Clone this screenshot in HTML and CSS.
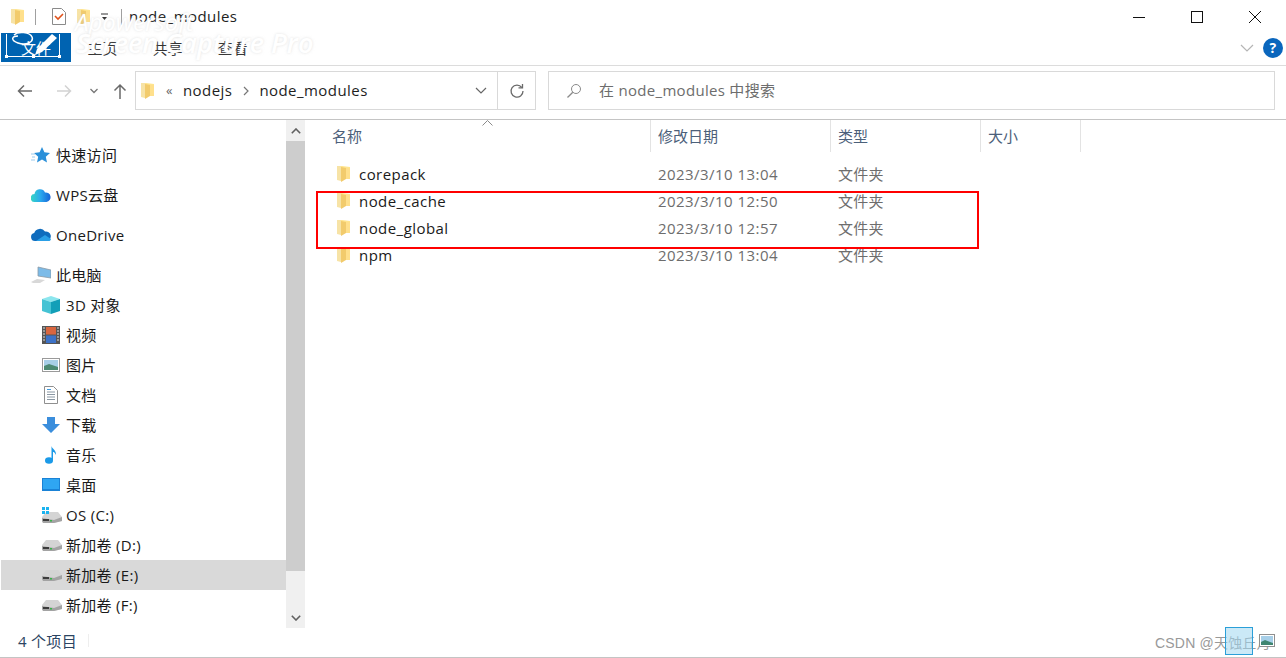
FILE: index.html
```html
<!DOCTYPE html>
<html lang="zh-CN">
<head>
  <meta charset="UTF-8">
  <title>node_modules</title>
  <link rel="stylesheet" href="styles.css">
</head>
<body>
  <svg class="defs" width="0" height="0">
    <defs>
      <symbol id="folder" viewBox="0 0 13 17">
        <path d="M0 1h5l8 1v12H0z" fill="#ffe58f"/>
        <path d="M0 1h4v15l-4-1z" fill="#f7e3a6"/>
        <path d="M4 2l5 1v11l-5 3z" fill="#f2cb6c"/>
        <path d="M9 3h4v11H9z" fill="#ffe08c"/>
      </symbol>
      <symbol id="drive" viewBox="0 0 20 12">
        <path d="M4 1h12l4 5v4l-8 2H1l-1-2V6z" fill="#d4d4d4"/>
        <path d="M0 7l12 2 8-3v4l-8 2H1l-1-2z" fill="#a3a3a3"/>
        <rect x="1" y="8" width="6" height="2" fill="#3b3b3b"/>
        <rect x="8" y="9" width="2" height="1.500" fill="#38b44a"/>
      </symbol>
    </defs>
  </svg>

  <div class="window">
    <div class="titlebar">
      <svg class="qa-folder" width="13" height="17"><use href="#folder"/></svg>
      <span class="qa-sep"></span>
      <svg class="qa-doc" width="14" height="17" viewBox="0 0 14 17">
        <path d="M.5.5h9l4 4v12H.5z" fill="#fff" stroke="#8a8a8a"/>
        <path d="M3 8l3 3 5-5" fill="none" stroke="#e0521b" stroke-width="1.6"/>
      </svg>
      <svg class="qa-folder2" width="13" height="17"><use href="#folder"/></svg>
      <svg class="qa-drop" width="8" height="8" viewBox="0 0 8 8">
        <path d="M0 1h7" stroke="#333"/><path d="M1 4h5L3.500 7z" fill="#333"/>
      </svg>
      <span class="qa-sep second"></span>
      <span class="title-text">node_modules</span>
      <div class="win-btns">
        <svg width="14" height="14" viewBox="0 0 14 14"><path d="M1 7.500h12" stroke="#111"/></svg>
        <svg width="14" height="14" viewBox="0 0 14 14"><rect x="1.500" y="1.500" width="11" height="11" fill="none" stroke="#111"/></svg>
        <svg width="14" height="14" viewBox="0 0 14 14"><path d="M1 1l12 12M13 1L1 13" stroke="#111"/></svg>
      </div>
    </div>

    <div class="ribbon">
      <div class="tab file">文件</div>
      <div class="tab">主页</div>
      <div class="tab">共享</div>
      <div class="tab">查看</div>
      <div class="ribbon-right">
        <svg width="14" height="8" viewBox="0 0 14 8"><path d="M1 1l6 6 6-6" fill="none" stroke="#b5b5b5" stroke-width="1.200"/></svg>
        <span class="help">?</span>
      </div>
    </div>

    <div class="addressbar">
      <div class="nav">
        <svg width="16" height="14" viewBox="0 0 16 14"><path d="M15 7H2M7 1.500L1.500 7 7 12.500" fill="none" stroke="#6a6a6a" stroke-width="1.500"/></svg>
        <svg width="16" height="14" viewBox="0 0 16 14"><path d="M1 7h13M9 1.500L14.500 7 9 12.500" fill="none" stroke="#d2d2d2" stroke-width="1.500"/></svg>
        <svg width="8" height="6" viewBox="0 0 8 6"><path d="M.5 1L4 4.500 7.500 1" fill="none" stroke="#777" stroke-width="1.300"/></svg>
        <svg width="14" height="16" viewBox="0 0 14 16"><path d="M7 16V2M1.500 7.500L7 2l5.500 5.500" fill="none" stroke="#6a6a6a" stroke-width="1.500"/></svg>
      </div>
      <div class="path-box">
        <svg class="path-folder" width="13" height="17"><use href="#folder"/></svg>
        <span class="crumb-more">«</span>
        <span class="crumb">nodejs</span>
        <svg class="crumb-arrow" width="6" height="10" viewBox="0 0 6 10"><path d="M1 1l4 4-4 4" fill="none" stroke="#777" stroke-width="1.200"/></svg>
        <span class="crumb">node_modules</span>
        <svg class="path-drop" width="12" height="7" viewBox="0 0 12 7"><path d="M1 1l5 5 5-5" fill="none" stroke="#666" stroke-width="1.200"/></svg>
        <span class="path-refresh">
          <svg width="16" height="16" viewBox="0 0 16 16"><path d="M12.800 4.500A6 6 0 1 0 14 8" fill="none" stroke="#6a6a6a" stroke-width="1.300"/><path d="M9.500 4.800h4V1" fill="none" stroke="#6a6a6a" stroke-width="1.300"/></svg>
        </span>
      </div>
      <div class="search-box">
        <svg width="16" height="16" viewBox="0 0 16 16"><circle cx="10" cy="6" r="4.500" fill="none" stroke="#8a8a8a"/><path d="M6.800 9.200L1.500 14.500" stroke="#8a8a8a" stroke-width="1.300"/></svg>
        <span class="search-text">在 node_modules 中搜索</span>
      </div>
    </div>

    <div class="main">
      <nav class="sidebar">
        <div class="nav-item top">
          <svg class="ico" width="20" height="18" viewBox="0 0 20 18"><path d="M11 1l2.400 5.300 5.600.6-4.200 3.800 1.200 5.800L11 13.600 6 16.500l1.200-5.800L3 6.900l5.600-.6z" fill="#2b90d9"/><path d="M0 8h4M1 11h3M0 14h4" stroke="#9ccbee"/></svg>
          快速访问
        </div>
        <div class="nav-item top">
          <svg class="ico" width="20" height="14" viewBox="0 0 20 14"><defs><linearGradient id="wps" x1="0" y1="0" x2="1" y2="0"><stop offset="0" stop-color="#35d6c4"/><stop offset=".5" stop-color="#2aa8ee"/><stop offset="1" stop-color="#1763d6"/></linearGradient></defs><path d="M4 14a4 4 0 0 1-.5-8A5.500 5.500 0 0 1 14 4.500 4.800 4.800 0 0 1 15.500 14z" fill="url(#wps)"/></svg>
          WPS云盘
        </div>
        <div class="nav-item top">
          <svg class="ico" width="20" height="13" viewBox="0 0 20 13"><path d="M4 13a4 4 0 0 1-.8-7.900A6 6 0 0 1 14 3.600 4.800 4.800 0 0 1 16 13z" fill="#0f6cbd"/><path d="M5 13l9-6 6 4a2.500 2.500 0 0 1-3 2z" fill="#2a9fe6"/></svg>
          OneDrive
        </div>
        <div class="nav-item pc">
          <svg class="ico" width="20" height="18" viewBox="0 0 20 18"><path d="M7 1l13 3v8L7 10z" fill="#7cbbe8" stroke="#8c9aa6" stroke-width=".8"/><path d="M0 16l6-3 8 1-5 3H2z" fill="#d8d8d8"/></svg>
          此电脑
        </div>
        <div class="nav-item sub">
          <svg class="ico" width="18" height="18" viewBox="0 0 18 18"><path d="M9 0l9 3-9 3-9-3z" fill="#8ce6ee"/><path d="M0 3l9 3v12l-9-3z" fill="#45c3d4"/><path d="M18 3l-9 3v12l9-3z" fill="#139fb8"/></svg>
          3D 对象
        </div>
        <div class="nav-item sub">
          <svg class="ico" width="18" height="18" viewBox="0 0 18 18"><rect width="18" height="18" fill="#555"/><rect x="4" y="1" width="10" height="7.500" fill="#d9663f"/><rect x="4" y="9.500" width="10" height="7.500" fill="#3d72c7"/><path d="M1 2h2M1 5h2M1 8h2M1 11h2M1 14h2M15 2h2M15 5h2M15 8h2M15 11h2M15 14h2" stroke="#ddd" stroke-width="1.200"/></svg>
          视频
        </div>
        <div class="nav-item sub">
          <svg class="ico" width="18" height="14" viewBox="0 0 18 14"><rect x=".5" y=".5" width="17" height="13" fill="#fff" stroke="#9a9a9a"/><rect x="2" y="2" width="14" height="10" fill="#a7cfe8"/><path d="M2 8l5-2 9 3v3H2z" fill="#4c8a74"/></svg>
          图片
        </div>
        <div class="nav-item sub">
          <svg class="ico" width="14" height="18" viewBox="0 0 14 18"><path d="M.5.500h9l4 4v13H.5z" fill="#fff" stroke="#8f8f8f"/><path d="M3 6h8M3 8.500h8M3 11h8M3 13.500h8" stroke="#8a97a3"/><path d="M3 3.500h4" stroke="#3f9be0"/></svg>
          文档
        </div>
        <div class="nav-item sub">
          <svg class="ico" width="18" height="16" viewBox="0 0 18 16"><path d="M5 0h8v7h5l-9 9-9-9h5z" fill="#3b8edc"/></svg>
          下载
        </div>
        <div class="nav-item sub">
          <svg class="ico" width="12" height="18" viewBox="0 0 12 18"><ellipse cx="4" cy="14.500" rx="4" ry="3.300" fill="#1b9ae8"/><path d="M6.500 14V0c.5 3 5 4 4.500 9-1-2.500-2.500-3-3-3v8z" fill="#1b9ae8"/></svg>
          音乐
        </div>
        <div class="nav-item sub">
          <svg class="ico" width="18" height="13" viewBox="0 0 18 13"><rect width="18" height="13" fill="#1a82d6"/><rect x="1" y="1" width="16" height="10" fill="#2fa6f2"/></svg>
          桌面
        </div>
        <div class="nav-item sub">
          <svg class="ico wide" width="20" height="16" viewBox="0 0 20 16"><use href="#drive" y="4" width="20" height="12"/><path d="M0 0h3v3H0zM4 0h3v3H4zM0 4h3v3H0zM4 4h3v3H4z" fill="#1ab3f0"/></svg>
          OS (C:)
        </div>
        <div class="nav-item sub">
          <svg class="ico wide" width="20" height="12"><use href="#drive"/></svg>
          新加卷 (D:)
        </div>
        <div class="nav-item sub selected">
          <svg class="ico wide" width="20" height="12"><use href="#drive"/></svg>
          新加卷 (E:)
        </div>
        <div class="nav-item sub">
          <svg class="ico wide" width="20" height="12"><use href="#drive"/></svg>
          新加卷 (F:)
        </div>
      </nav>

      <div class="scrollbar">
        <div class="sb-btn">
          <svg width="10" height="6" viewBox="0 0 10 6"><path d="M.8 5.200L5 1l4.200 4.200" fill="none" stroke="#606060" stroke-width="1.600"/></svg>
        </div>
        <div class="sb-thumb"></div>
        <div class="sb-track"></div>
        <div class="sb-btn">
          <svg width="10" height="6" viewBox="0 0 10 6"><path d="M.8.800L5 5 9.200.800" fill="none" stroke="#606060" stroke-width="1.600"/></svg>
        </div>
      </div>

      <section class="files">
        <svg class="sort-caret" width="11" height="6" viewBox="0 0 11 6"><path d="M.5 5.500l5-5 5 5" fill="none" stroke="#8a8a8a"/></svg>
        <div class="row head">
          <div class="col name">名称</div>
          <div class="col date">修改日期</div>
          <div class="col type">类型</div>
          <div class="col size">大小</div>
        </div>
        <div class="rows">
          <div class="row">
            <div class="col name"><svg width="13" height="17"><use href="#folder"/></svg>corepack</div>
            <div class="col date">2023/3/10 13:04</div>
            <div class="col type">文件夹</div>
          </div>
          <div class="row">
            <div class="col name"><svg width="13" height="17"><use href="#folder"/></svg>node_cache</div>
            <div class="col date">2023/3/10 12:50</div>
            <div class="col type">文件夹</div>
          </div>
          <div class="row">
            <div class="col name"><svg width="13" height="17"><use href="#folder"/></svg>node_global</div>
            <div class="col date">2023/3/10 12:57</div>
            <div class="col type">文件夹</div>
          </div>
          <div class="row">
            <div class="col name"><svg width="13" height="17"><use href="#folder"/></svg>npm</div>
            <div class="col date">2023/3/10 13:04</div>
            <div class="col type">文件夹</div>
          </div>
        </div>
        <div class="redbox"></div>
      </section>
    </div>

    <div class="statusbar">
      <span>4 个项目</span>
      <span class="status-sep"></span>
    </div>
  </div>

  <!-- stuff from the capture tool, lies over the window -->
  <div class="mark-small">Apowersoft</div>
  <div class="mark-big">Screen Capture Pro</div>
  <svg class="scribble" width="56" height="26" viewBox="0 0 56 26">
    <path d="M8 3c4-4 16-3 18 2s-6 9-14 6-6-7 0-7" fill="none" stroke="#fff" stroke-width="1.500"/>
    <path d="M31 17L46 2l5 4-15 14-7 3z" fill="#fff"/>
  </svg>
  <div class="file-select"><i></i><i></i><i></i></div>
  <div class="csdn">CSDN @天蚀丘月</div>
  <div class="tray-box"></div>
  <svg class="tray-pic" width="16" height="14" viewBox="0 0 16 14"><rect x=".5" y=".5" width="15" height="12" fill="#fff" stroke="#8f8f8f"/><rect x="2" y="2" width="12" height="9" fill="#a7cfe8"/><path d="M2 8l4-2 8 3v2H2z" fill="#3f8570"/></svg>
</body>
</html>
```

FILE: styles.css
```css
* { box-sizing: border-box; }
html, body {
  margin: 0;
  height: 100%;
  overflow: hidden;
}
body {
  background: #fff;
  color: #1a1a1a;
  font-family: "Open Sans", "Noto Sans CJK SC", sans-serif;
  font-size: 15px;
  letter-spacing: .3px;
  position: relative;
}
.defs { position: absolute; }
.window {
  height: 658px;
  display: flex;
  flex-direction: column;
  border-bottom: 1px solid #c4c4c4;
}

/* title bar */
.titlebar {
  height: 33px;
  display: flex;
  align-items: center;
  padding-left: 11px;
  flex: none;
}
.qa-sep {
  width: 1px;
  height: 16px;
  background: #a0a0a0;
  margin-left: 11px;
}
.qa-sep.second { margin-left: 12px; }
.qa-doc { margin-left: 16px; }
.qa-folder2 { margin-left: 11px; }
.qa-drop { margin-left: 11px; }
.title-text {
  margin: 0 0 2px 7px;
  letter-spacing: .45px;
  color: #222;
}
.win-btns {
  margin-left: auto;
  display: flex;
  gap: 44px;
  padding-right: 24px;
}

/* ribbon */
.ribbon {
  height: 33px;
  flex: none;
  display: flex;
  padding-left: 1px;
  border-bottom: 1px solid #dcdcdc;
}
.tab {
  width: 65px;
  height: 29px;
  line-height: 31px;
  text-align: center;
  letter-spacing: 0;
  color: #333;
}
.tab.file {
  width: 70px;
  background: #0063b1;
  color: #fff;
  margin-right: -1px;
}
.ribbon-right {
  margin-left: auto;
  display: flex;
  align-items: center;
  gap: 9px;
  padding: 0 3px 2px 0;
}
.help {
  width: 20px;
  height: 20px;
  border-radius: 50%;
  background: #0a66bd;
  color: #fff;
  font-weight: 700;
  font-size: 14px;
  text-align: center;
  line-height: 20px;
}

/* address row */
.addressbar {
  height: 54px;
  flex: none;
  display: flex;
  align-items: center;
  padding: 0 11px 4px 0;
  border-bottom: 1px solid #c4c4c4;
}
.nav {
  width: 135px;
  padding-left: 17px;
  display: flex;
  align-items: center;
}
.nav svg:nth-child(2) { margin-left: 23px; }
.nav svg:nth-child(3) { margin-left: 18px; }
.nav svg:nth-child(4) { margin-left: 15px; }
.path-box, .search-box {
  height: 39px;
  border: 1px solid #d9d9d9;
  display: flex;
  align-items: center;
}
.path-box {
  width: 401px;
  padding-left: 5px;
  letter-spacing: .45px;
  color: #1e1e1e;
}
.path-folder { flex: none; }
.crumb { margin-bottom: 2px; }
.crumb-more { margin: 0 10px 2px 12px; color: #666; font-size: 13px; }
.crumb-arrow { margin: 0 10px 0 11px; }
.path-drop { margin-left: auto; }
.path-refresh {
  width: 38px;
  height: 37px;
  margin-left: 10px;
  border-left: 1px solid #d9d9d9;
  display: flex;
  align-items: center;
  justify-content: center;
}
.search-box {
  flex: 1;
  margin-left: 12px;
  padding-left: 17px;
  gap: 17px;
  color: #6d6d6d;
}
.search-text { margin-bottom: 2px; }

/* main area */
.main {
  flex: 1;
  min-height: 0;
  display: flex;
}
.sidebar {
  width: 286px;
  flex: none;
  padding: 20px 0 0 1px;
  overflow: hidden;
}
.nav-item {
  height: 30px;
  padding-bottom: 1px;
  display: flex;
  align-items: center;
  white-space: nowrap;
  color: #1a1a1a;
}
.nav-item.top, .nav-item.pc { padding-left: 30px; }
.nav-item.top { margin-bottom: 10px; }
.nav-item .ico { flex: none; margin-right: 5px; }
.nav-item.sub { padding-left: 41px; }
.nav-item.sub .ico { margin-right: 6px; }
.nav-item.sub .ico[width="14"] { margin: 0 8px 0 2px; }
.nav-item.sub .ico[width="12"] { margin: 0 9px 0 3px; }
.nav-item.sub .ico.wide { margin-right: 4px; }
.selected { background: #d9d9d9; }

.scrollbar {
  width: 19px;
  flex: none;
  display: flex;
  flex-direction: column;
  background: #f0f0f0;
}
.sb-btn {
  height: 21px;
  display: flex;
  align-items: center;
  justify-content: center;
  flex: none;
}
.sb-thumb { height: 430px; background: #cdcdcd; }
.sb-track { flex: 1; }

/* file list */
.files {
  flex: 1;
  position: relative;
  padding-left: 20px;
}
.sort-caret {
  position: absolute;
  left: 177px;
  top: 0;
}
.row {
  display: flex;
  height: 27px;
  align-items: center;
}
.row.head {
  height: 32px;
  color: #4c607a;
  letter-spacing: 0;
}
.rows { margin-top: 8px; }
.col {
  height: 100%;
  display: flex;
  align-items: center;
  padding-left: 7px;
  white-space: nowrap;
}
.col.name { width: 326px; gap: 9px; padding-left: 12px; letter-spacing: .45px; }
.col.date { width: 180px; letter-spacing: .45px; }
.col.type { width: 150px; padding-bottom: 1px; }
.col.size { width: 100px; }
.row.head .col { border-right: 1px solid #e3e3e3; padding-bottom: 2px; letter-spacing: 0; }
.row.head .col.name { padding-left: 7px; }
.rows .col.name { color: #1a1a1a; }
.rows .col.date, .rows .col.type { color: #6d6d6d; }
.redbox {
  position: absolute;
  left: 11px;
  top: 71px;
  width: 663px;
  height: 58px;
  border: 2px solid #f00;
}

/* status */
.statusbar {
  height: 29px;
  flex: none;
  display: flex;
  align-items: center;
  padding: 0 0 4px 18px;
  color: #2c4462;
}
.status-sep {
  width: 1px;
  height: 13px;
  background: #eee;
  margin-left: 11px;
}

/* overlays */
.mark-small, .mark-big {
  position: absolute;
  color: #fff;
  font-family: "Open Sans", sans-serif;
  font-style: italic;
  letter-spacing: 0;
  text-shadow: 0 0 3px rgba(200,200,200,.55);
  white-space: nowrap;
}
.mark-small { left: 75px; top: 5px; font-size: 24px; }
.mark-big { left: 76px; top: 24px; font-size: 27px; font-weight: 600; }
.scribble {
  position: absolute;
  left: 6px;
  top: 32px;
}
.file-select {
  position: absolute;
  left: 6px;
  top: 34px;
  width: 54px;
  height: 23px;
  border: 1px solid #fff;
  border-top: 0;
}
.file-select i {
  position: absolute;
  bottom: -2px;
  width: 3px;
  height: 3px;
  background: #fff;
}
.file-select i:nth-child(1) { left: -2px; }
.file-select i:nth-child(2) { left: 25px; }
.file-select i:nth-child(3) { right: -2px; }
.csdn {
  position: absolute;
  left: 1155px;
  top: 632px;
  color: #999;
  font-family: "Liberation Sans", "Noto Sans CJK SC", sans-serif;
  font-size: 14px;
  letter-spacing: .2px;
}
.tray-box {
  position: absolute;
  left: 1225px;
  top: 627px;
  width: 28px;
  height: 28px;
  border: 1px solid #2a9fd8;
  background: rgba(160,215,240,.55);
}
.tray-pic {
  position: absolute;
  left: 1259px;
  top: 634px;
}
```
